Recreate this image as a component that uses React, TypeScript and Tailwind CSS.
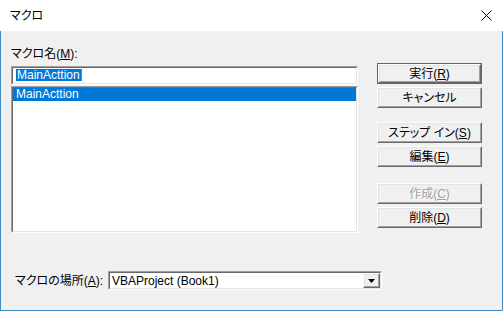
import React from "react";

const FONT = "font-['Liberation_Sans','Noto_Sans_CJK_JP',sans-serif] [font-feature-settings:'palt']";

function Sunken({ className, children }: { className: string; children?: React.ReactNode }) {
  return (
    <div className={"border border-t-[#a0a0a0] border-l-[#a0a0a0] border-b-white border-r-white " + className}>
      <div className="h-full w-full border border-t-[#696969] border-l-[#696969] border-b-[#e3e3e3] border-r-[#e3e3e3] bg-white overflow-hidden">
        {children}
      </div>
    </div>
  );
}

function Raised({ children, className }: { children?: React.ReactNode; className: string }) {
  return (
    <div className={"border border-t-white border-l-white border-b-[#696969] border-r-[#696969] " + className}>
      <div className="h-full w-full border border-t-[#e3e3e3] border-l-[#e3e3e3] border-b-[#a0a0a0] border-r-[#a0a0a0] bg-[#f0f0f0] flex items-center justify-center">
        {children}
      </div>
    </div>
  );
}

function Btn({
  label,
  acc,
  def,
  disabled,
  mt,
}: {
  label: string;
  acc?: string;
  def?: boolean;
  disabled?: boolean;
  mt: string;
}) {
  const text = (
    <span
      className={
        "text-[12px] leading-[14px] whitespace-nowrap " +
        (disabled ? "text-[#a0a0a0] [text-shadow:1px_1px_0_#ffffff]" : "text-black")
      }
    >
      {label}
      {acc ? (
        <>
          (<span className="underline underline-offset-[1px]">{acc}</span>)
        </>
      ) : null}
    </span>
  );
  if (def) {
    return (
      <div className={"h-[21px] w-[105px] border border-[#646464] " + mt}>
        <Raised className="h-full w-full">{text}</Raised>
      </div>
    );
  }
  return <Raised className={"h-[21px] w-[105px] " + mt}>{text}</Raised>;
}

export default function App() {
  return (
    <div className={"w-[503px] h-[311px] bg-white flex flex-col overflow-hidden " + FONT}>
      {/* title bar */}
      <div className="h-[31px] flex items-center justify-between pl-[10px] pr-[10px] bg-white">
        <span className="text-[12px] leading-[14px] text-black">マクロ</span>
        <svg width="11" height="11" viewBox="0 0 11 11" className="mr-[1px]">
          <path d="M0.5 0.5 L10.5 10.5 M10.5 0.5 L0.5 10.5" stroke="#000" strokeWidth="1" fill="none" />
        </svg>
      </div>

      {/* body */}
      <div className="flex-1 bg-[#f0f0f0] border-l border-r border-b border-[#3d8fc6] pl-[10px] flex flex-col">
        <div className="flex">
          {/* left column */}
          <div className="w-[347px] pt-[15px] flex flex-col">
            <div className="h-[16px] leading-[16px] text-[12px] text-black">
              マクロ名(<span className="underline underline-offset-[1px]">M</span>):
            </div>
            <Sunken className="mt-[4px] h-[19px] w-[347px]">
              <div className="pl-[3px] pt-[1px] flex items-start">
                <span className="bg-[#0078d7] text-white text-[12px] leading-[13px] px-[1px] h-[12px] flex items-center">
                  MainActtion
                </span>
                <span className="w-[1px] h-[12px] bg-[#c0702a]" />
              </div>
            </Sunken>
            <Sunken className="mt-[1px] h-[147px] w-[347px]">
              <div className="h-[13px] bg-[#0078d7] text-white text-[12px] leading-[13px] pl-[3px]">
                MainActtion
              </div>
            </Sunken>
          </div>

          {/* right column */}
          <div className="ml-[19px] w-[105px] pt-[32px] flex flex-col">
            <Btn label="実行" acc="R" def mt="mt-0" />
            <Btn label="キャンセル" mt="mt-[3px]" />
            <Btn label="ステップ イン" acc="S" mt="mt-[14px]" />
            <Btn label="編集" acc="E" mt="mt-[3px]" />
            <Btn label="作成" acc="C" disabled mt="mt-[16px]" />
            <Btn label="削除" acc="D" mt="mt-[3px]" />
          </div>
        </div>

        {/* bottom row */}
        <div className="mt-[38px] h-[19px] flex items-center">
          <div className="ml-[4px] w-[93px] text-[12px] leading-[14px] text-black whitespace-nowrap">
            マクロの場所(<span className="underline underline-offset-[1px]">A</span>):
          </div>
          <Sunken className="h-[19px] w-[274px]">
            <div className="h-full flex items-center justify-between">
              <span className="pl-[2px] text-[12px] leading-[14px] text-black whitespace-nowrap">
                VBAProject (Book1)
              </span>
              <Raised className="h-full w-[17px]">
                <svg width="7" height="4" viewBox="0 0 7 4">
                  <path d="M0 0 H7 L3.5 4 Z" fill="#000" />
                </svg>
              </Raised>
            </div>
          </Sunken>
        </div>
      </div>
    </div>
  );
}
